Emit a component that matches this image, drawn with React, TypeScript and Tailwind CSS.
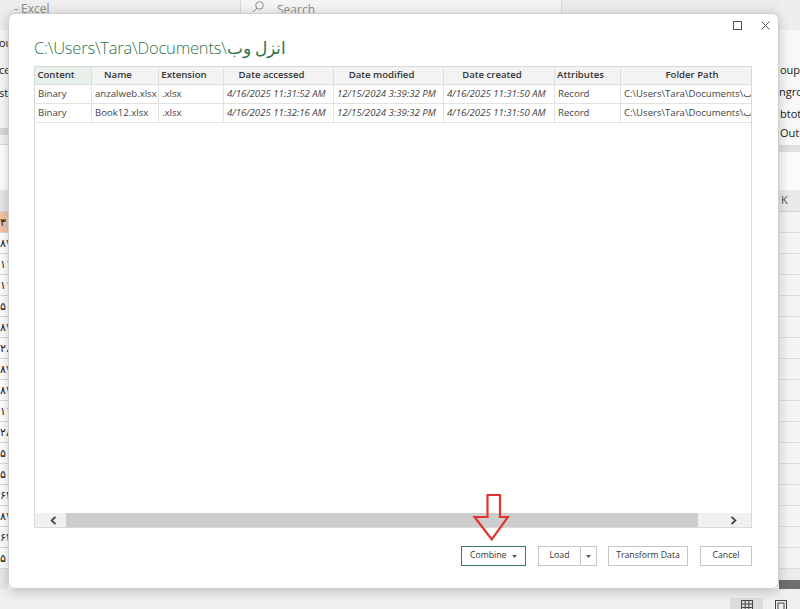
import React from "react";

const COLS = [
  { name: "Content", w: "w-[57px]", hdr: "bg-[#e8f0ea]" },
  { name: "Name", w: "w-[67px]", hdr: "bg-[#f3f3f3]" },
  { name: "Extension", w: "w-[65px]", hdr: "bg-[#f3f3f3]" },
  { name: "Date accessed", w: "w-[110px]", hdr: "bg-[#f3f3f3]" },
  { name: "Date modified", w: "w-[110px]", hdr: "bg-[#f3f3f3]" },
  { name: "Date created", w: "w-[111px]", hdr: "bg-[#f3f3f3]" },
  { name: "Attributes", w: "w-[66px]", hdr: "bg-[#f3f3f3]" },
  { name: "Folder Path", w: "w-[157px]", hdr: "bg-[#f3f3f3]" },
];

const ROWS = [
  [
    "Binary",
    "anzalweb.xlsx",
    ".xlsx",
    "4/16/2025 11:31:52 AM",
    "12/15/2024 3:39:32 PM",
    "4/16/2025 11:31:50 AM",
    "Record",
    "C:\\Users\\Tara\\Documents\\انزل وب\\",
  ],
  [
    "Binary",
    "Book12.xlsx",
    ".xlsx",
    "4/16/2025 11:32:16 AM",
    "12/15/2024 3:39:32 PM",
    "4/16/2025 11:31:50 AM",
    "Record",
    "C:\\Users\\Tara\\Documents\\انزل وب\\",
  ],
];
const ITALIC = [false, false, false, true, true, true, false, false];

const LEFT_DIGITS = [
  "۳۰",
  "۸۷",
  "۱۱۰",
  "۱۱۰",
  "۵۰",
  "۸۷",
  "۲،",
  "۸۷",
  "۸۷",
  "۱۱۰",
  "۲۸",
  "۵۰",
  "۵۰",
  "۶۴",
  "۸۷",
  "۶۴",
  "۵۰",
];

function Caret() {
  return (
    <svg width="5" height="3" viewBox="0 0 5 3">
      <path d="M0 0 L5 0 L2.5 3 Z" fill="#555" />
    </svg>
  );
}

function TitleBar() {
  return (
    <div className="h-[30px] flex bg-[#eeeeee] text-[12px] leading-[16px] text-[#8c8c8c]">
      <div className="w-[232px] pl-[6px] pt-[1px] whitespace-nowrap">- Excel</div>
      <div className="w-[322px] h-[30px] border-x border-[#d9d9d9] bg-[#f4f4f4] flex items-start pl-[11px] pt-[1px] gap-[13px]">
        <svg width="12" height="12" viewBox="0 0 12 12" fill="none" stroke="#8c8c8c" strokeWidth="1">
          <circle cx="7.5" cy="4.5" r="3.8" />
          <path d="M4.8 7.2 L1 11" />
        </svg>
        <span className="pt-[1px]">Search</span>
      </div>
      <div className="flex-1 bg-[#ececec]" />
    </div>
  );
}

function LeftStrip() {
  return (
    <div className="w-[8px] shrink-0 flex flex-col overflow-hidden text-[11px] text-[#222]">
      <div className="h-[30px] bg-[#eeeeee]" />
      <div className="h-[98px] bg-[#f9f9f9] flex flex-col pt-[5px] whitespace-nowrap">
        <div className="h-[16px] leading-[16px] -ml-[1px]">ou</div>
        <div className="h-[16px] leading-[16px] mt-[11px] -ml-[1px]">ce</div>
        <div className="h-[16px] leading-[16px] mt-[7px] -ml-[1px]">st</div>
      </div>
      <div className="h-[7px] bg-[#dadada]" />
      <div className="h-[10px] bg-[#f5f5f5] border-b border-[#dcdcdc]" />
      <div className="h-[45px] bg-white" />
      <div className="h-[22px] bg-[#e8e8e8] border-b border-[#d4d4d4]" />
      {LEFT_DIGITS.map((d, i) => (
        <div
          key={i}
          className={
            i === 0
              ? "h-[21px] bg-[#f5c5a5] border-b border-[#dcdcdc] flex items-center whitespace-nowrap"
              : "h-[21px] bg-white border-b border-[#dcdcdc] flex items-center whitespace-nowrap"
          }
        >
          {d}
        </div>
      ))}
      <div className="flex-1 bg-[#e9e9e9]" />
    </div>
  );
}

function RightStrip() {
  return (
    <div className="w-[21px] shrink-0 flex flex-col overflow-hidden text-[11px] text-[#222]">
      <div className="h-[30px] bg-[#eeeeee]" />
      <div className="h-[115px] bg-[#f8f8f8] flex flex-col pt-[33px] whitespace-nowrap">
        <div className="h-[14px] leading-[14px] pl-[1px]">oup</div>
        <div className="h-[14px] leading-[14px] mt-[8px]">ngroup</div>
        <div className="h-[14px] leading-[14px] mt-[8px] pl-[1px]">btotal</div>
        <div className="h-[14px] leading-[14px] mt-[5px] pl-[1px]">Outline</div>
      </div>
      <div className="h-[7px] bg-[#e0e0e0]" />
      <div className="h-[38px] bg-[#fbfbfb]" />
      <div className="h-[22px] bg-[#e9e9e9] border-b border-[#d4d4d4] flex items-center pl-[2px] text-[#555]">K</div>
      {LEFT_DIGITS.map((_, i) => (
        <div key={i} className="h-[21px] bg-[#f4f4f4] border-b border-[#dcdcdc]" />
      ))}
      <div className="h-[11px] bg-[#ececec]" />
      <div className="flex-1 bg-[#6f6f6f]" />
    </div>
  );
}

function StatusBar() {
  return (
    <div className="h-[20px] shrink-0 bg-[#efefef] flex items-start">
      <div className="ml-[730px] mt-[9px] w-[33px] h-[11px] bg-[#dcdcdc] flex justify-center pt-[2px]">
        <svg width="12" height="10" viewBox="0 0 12 10" fill="none" stroke="#444" strokeWidth="1">
          <rect x="0.5" y="0.5" width="11" height="10" />
          <path d="M0.5 4 H11.5 M0.5 7.5 H11.5 M4.2 0.5 V10 M7.8 0.5 V10" />
        </svg>
      </div>
      <div className="ml-[12px] mt-[11px]">
        <svg width="12" height="10" viewBox="0 0 12 10" fill="none" stroke="#444" strokeWidth="1">
          <rect x="0.5" y="0.5" width="11" height="10" />
          <rect x="3" y="3" width="6" height="7" />
        </svg>
      </div>
    </div>
  );
}

function Table() {
  return (
    <div className="mt-[7px] h-[462px] shrink-0 border border-[#d9d9d9] flex flex-col overflow-hidden text-[9.6px]">
      <div className="flex h-[18px] shrink-0 border-b border-[#dedede]">
        {COLS.map((c) => (
          <div
            key={c.name}
            className={`${c.w} ${c.hdr} shrink-0 border-r border-[#dedede] flex items-center justify-center pr-[14px] font-semibold text-[#333] whitespace-nowrap`}
          >
            {c.name}
          </div>
        ))}
      </div>
      {ROWS.map((r, ri) => (
        <div key={ri} className="flex h-[19px] shrink-0 border-b border-[#e2e2e2]">
          {r.map((v, ci) => (
            <div
              key={ci}
              className={`${COLS[ci].w} shrink-0 border-r border-[#e2e2e2] flex items-center pl-[3px] text-[#444] whitespace-nowrap overflow-hidden ${
                ITALIC[ci] ? "italic" : ""
              }`}
            >
              {v}
            </div>
          ))}
        </div>
      ))}
      <div className="flex-1" />
      <div className="h-[14px] shrink-0 flex bg-[#f0f0f0]">
        <div className="w-[31px] flex items-center pl-[15px]">
          <svg width="7" height="9" viewBox="0 0 7 9" fill="none" stroke="#444" strokeWidth="1.8">
            <path d="M5.5 0.8 L1.6 4.5 L5.5 8.2" />
          </svg>
        </div>
        <div className="w-[632px] bg-[#cdcdcd]" />
        <div className="flex-1 flex items-center justify-end pr-[14px]">
          <svg width="7" height="9" viewBox="0 0 7 9" fill="none" stroke="#444" strokeWidth="1.8">
            <path d="M1.5 0.8 L5.4 4.5 L1.5 8.2" />
          </svg>
        </div>
      </div>
    </div>
  );
}

function Buttons() {
  return (
    <div className="mt-[18px] h-[20px] flex justify-end text-[8.7px] text-[#333]">
      <div className="w-[65px] border border-[#3d7c58] flex items-center pl-[8px] gap-[6px]">
        <span>Combine</span>
        <Caret />
      </div>
      <div className="ml-[12px] w-[59px] border border-[#c6c6c6] flex">
        <div className="w-[42px] flex items-center justify-center border-r border-[#c6c6c6]">Load</div>
        <div className="flex-1 flex items-center justify-center">
          <Caret />
        </div>
      </div>
      <div className="ml-[11px] w-[80px] border border-[#c6c6c6] flex items-center justify-center">Transform Data</div>
      <div className="ml-[12px] w-[52px] border border-[#c6c6c6] flex items-center justify-center">Cancel</div>
    </div>
  );
}

function Dialog() {
  return (
    <div className="absolute left-[8px] top-[13px] w-[771px] h-[576px] bg-white rounded-[7px] border border-[#cfcfcf] shadow-[0_2px_12px_rgba(0,0,0,0.22)] flex flex-col pl-[25px] pr-[26px] pt-[7px]">
      <div className="h-[9px] shrink-0 flex justify-end -mr-[18px] gap-[19px]">
        <svg width="9" height="9" viewBox="0 0 9 9">
          <rect x="0.5" y="0.5" width="8" height="8" fill="none" stroke="#555" strokeWidth="1" />
        </svg>
        <svg width="9" height="9" viewBox="0 0 9 9">
          <path d="M0.5 0.5 L8.5 8.5 M8.5 0.5 L0.5 8.5" stroke="#555" strokeWidth="1" />
        </svg>
      </div>
      <div className="mt-[7px] h-[22px] shrink-0 text-[16.5px] leading-[22px] tracking-[-0.2px] font-light text-[#2f7550] whitespace-nowrap">
        {"C:\\Users\\Tara\\Documents\\انزل وب"}
      </div>
      <Table />
      <Buttons />
    </div>
  );
}

export default function App() {
  return (
    <div className="relative w-[800px] h-[609px] overflow-hidden bg-white font-['Open_Sans','Noto_Sans','DejaVu_Sans',sans-serif] text-[#333]">
      <div className="flex flex-col h-full">
        <div className="flex flex-1 min-h-0">
          <LeftStrip />
          <div className="flex-1 flex flex-col bg-white">
            <TitleBar />
          </div>
          <RightStrip />
        </div>
        <StatusBar />
      </div>
      <Dialog />
      <svg className="absolute left-[472px] top-[493px]" width="38" height="49" viewBox="0 0 38 49">
        <path
          d="M15.5 2 H28 V24 H36 L19.8 46.5 L2.5 24 H15.5 Z"
          fill="none"
          stroke="#e0352d"
          strokeWidth="2.2"
        />
      </svg>
    </div>
  );
}
